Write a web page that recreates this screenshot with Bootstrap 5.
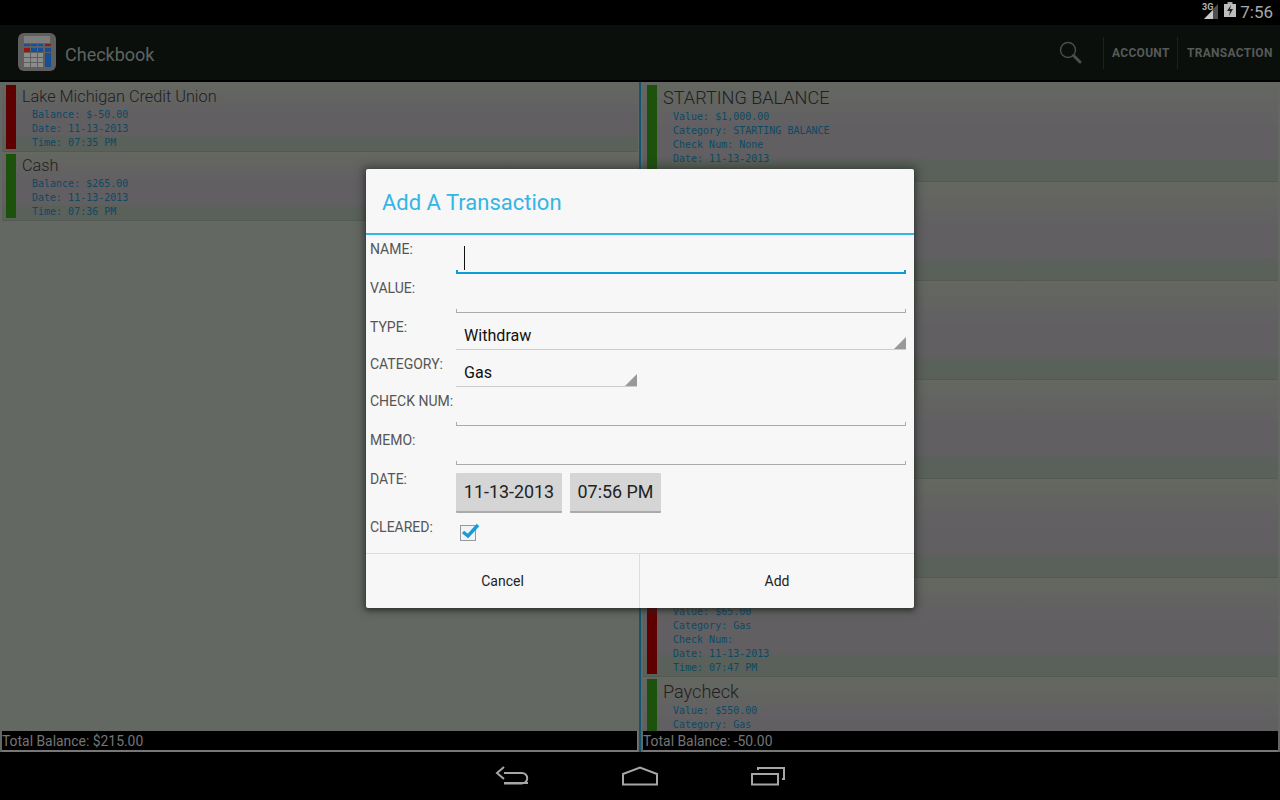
<!DOCTYPE html>
<html lang="en">
<head>
<meta charset="utf-8">
<title>Checkbook</title>
<link href="https://cdn.jsdelivr.net/npm/bootstrap@5.3.0/dist/css/bootstrap.min.css" rel="stylesheet">
<style>
html,body{width:1280px;height:800px;overflow:hidden;background:#000;font-family:Roboto,"Liberation Sans",sans-serif}
.app{width:1280px;height:800px;position:relative}
.statusbar{height:25px;background:#000;color:#a9a9a9;font-size:17px;line-height:25px;padding-right:7px}
.sig{margin-right:6px;margin-top:-4px}
.bat{margin-right:4px;margin-top:-5px}
.actionbar{height:57px;background:#0a0f0c;border-bottom:2px solid #000;color:#5f635f}
.appicon{margin-left:18px;margin-right:9px;margin-top:-1px}
.apptitle{font-size:18px;margin-top:3px}
.srch{margin-right:21px;margin-top:-1px}
.actbtn{font-size:12px;font-weight:700;letter-spacing:.3px;color:#565a57;height:32px;line-height:32px;border-left:1px solid #1c211e}
.btn-acc{width:74px;padding-left:8px}
.btn-tra{width:103px;padding-left:9px}
.main{height:670px;background:#646862}
.pane{height:670px;padding-top:1px}
.pane-l{width:639px;padding-left:2px;padding-right:1px}
.pane-r{width:641px;border-left:2px solid #115570;padding-left:2px;padding-right:2px}
.rowlist{flex:1 1 0;overflow:hidden}
.acct{border-bottom:1px solid #545953;background:linear-gradient(#646860 0,#625f63 45%,#625f63 75%,#5a605a 81%,#5a605a 100%);padding:2px 0 2px 4px;gap:6px}
.h68{height:69px}
.h98{height:99px}
.flag{width:10px;flex:none}
.flag-red{background:#5f0000}
.flag-green{background:#1c520b}
.acct-name{font-weight:300;font-size:16.3px;line-height:22px;height:23px;padding-top:1px;color:#202020}
.big{font-size:18.1px;line-height:22px;padding-top:2px;height:25px}
.acct-line{font-family:"DejaVu Sans Mono","Liberation Mono",monospace;font-size:10px;line-height:14px;color:#0c4a62;padding-left:10px;white-space:pre}
.total{height:19px;flex:none;background:#000;color:#757575;border-bottom:2px solid #777;font-size:13.9px;line-height:20px;box-sizing:content-box}
.total-l{border-right:1px solid #777}
.navbar-bottom{height:48px;background:#000}
.navslot{width:128px}
.dlg{position:absolute;left:366px;top:169px;width:548px;height:439px;background:#f7f7f7;border-radius:2px;box-shadow:0 0 8px 3px rgba(40,45,40,.55),0 2px 4px rgba(0,0,0,.4)}
.dlg-title{height:66px;border-bottom:2px solid #33b5e5;color:#33b5e5;font-size:22px;line-height:67px;padding-left:16px}
.frow{padding-left:4px;padding-right:8px}
.flabel{width:86px;flex:none;font-size:14px;line-height:20px;padding-top:4px;color:#555;white-space:nowrap}
.h39{height:39px}.h37{height:37px}.h48{height:48px}.h40{height:40px}
.fedit{flex:1 1 0;height:100%;border-bottom:1px solid #aaa;position:relative}
.fedit::before,.fedit::after{content:"";position:absolute;bottom:0;width:1px;height:3px;background:#aaa}
.fedit::before{left:0}.fedit::after{right:0}
.focused{border-bottom:2px solid #0a9dd6}
.focused::before,.focused::after{background:#0a9dd6;width:2px;height:4px;bottom:-2px}
.caret{position:absolute;left:8px;top:11px;width:1px;height:24px;background:#111}
.fspin{border-bottom:1px solid #ccc;height:37px;position:relative;font-size:16.1px;line-height:46px;padding-left:8px;color:#111}
.fspin::after{content:"";position:absolute;right:0;bottom:0;border-style:solid;border-width:0 0 12px 12px;border-color:transparent transparent #999 transparent}
.spin-full{flex:1 1 0}
.spin-half{width:181px}
.pick{height:40px;background:#d5d5d5;border-bottom:2px solid #aaa;font-size:17.9px;line-height:38px;color:#222;border-radius:1px;text-align:center}
.pick-d{width:106px;margin-right:8px}
.pick-t{width:91px}
.dlg-foot{height:55px;border-top:1px solid #ddd}
.dlg-btn{flex:1 1 0;font-size:14px;line-height:54px;color:#222;text-align:center}
.dlg-btn-first{flex:none;width:273px}
.dlg-btn-last{border-left:1px solid #ddd}
.ck{margin:10px 0 0 4px}
</style>
</head>
<body>
<div class="app d-flex flex-column">
  <div class="statusbar d-flex justify-content-end align-items-center">
    <svg class="sig" width="16" height="18" viewBox="0 0 16 18">
      <text x="0" y="8" font-family="Roboto,sans-serif" font-size="9" font-weight="700" fill="#b5b5b5">3G</text>
      <polygon points="2,17 16,17 16,2 12,6" fill="#4f4f4f"/>
      <polygon points="2,17 11,17 11,8" fill="#c8c8c8"/>
    </svg>
    <svg class="bat" width="12" height="16" viewBox="0 0 12 16">
      <rect x="3.5" y="0" width="5" height="2" fill="#aaa"/>
      <rect x="0" y="2" width="12" height="13" fill="#bdbdbd"/>
      <polygon points="7,3 3,9 6,9 5,14 9,7 6,7" fill="#222"/>
    </svg>
    <span>7:56</span>
  </div>

  <div class="actionbar d-flex align-items-center">
    <svg class="appicon" width="38" height="38" viewBox="0 0 38 38">
      <rect width="38" height="38" rx="6" fill="#5f5f5f"/>
      <rect x="6" y="3" width="26" height="7" fill="#7d7d7d"/>
      <rect x="6" y="11" width="6" height="2" fill="#174f96"/><rect x="13" y="11" width="6" height="2" fill="#174f96"/><rect x="20" y="11" width="5" height="2" fill="#174f96"/><rect x="27" y="11" width="6" height="2" fill="#8a1c10"/>
      <rect x="6" y="15" width="6" height="4" fill="#9d1408"/><rect x="13" y="15" width="6" height="4" fill="#174f96"/><rect x="20" y="15" width="5" height="4" fill="#174f96"/>
      <rect x="27" y="15" width="6" height="4" fill="#174f96"/>
      <rect x="6" y="20" width="6" height="4" fill="#8c8c8c"/><rect x="13" y="20" width="6" height="4" fill="#8c8c8c"/><rect x="20" y="20" width="5" height="4" fill="#8c8c8c"/><rect x="27" y="20" width="6" height="14" fill="#174f96"/>
      <rect x="6" y="25" width="6" height="4" fill="#8c8c8c"/><rect x="13" y="25" width="6" height="4" fill="#8c8c8c"/><rect x="20" y="25" width="5" height="4" fill="#8c8c8c"/>
      <rect x="6" y="30" width="6" height="4" fill="#8c8c8c"/><rect x="13" y="30" width="6" height="4" fill="#8c8c8c"/><rect x="20" y="30" width="5" height="4" fill="#8c8c8c"/>
    </svg>
    <span class="apptitle flex-grow-1">Checkbook</span>
    <svg class="srch" width="23" height="23" viewBox="0 0 23 23">
      <circle cx="9" cy="9" r="7.5" fill="none" stroke="#4a4e4b" stroke-width="1.4"/>
      <line x1="14.5" y1="14.5" x2="21" y2="21" stroke="#4a4e4b" stroke-width="3" stroke-linecap="round"/>
    </svg>
    <span class="actbtn btn-acc">ACCOUNT</span>
    <span class="actbtn btn-tra">TRANSACTION</span>
  </div>

  <div class="main d-flex">
    <div class="pane pane-l d-flex flex-column">
      <div class="rowlist">
        <div class="acct h68 d-flex">
          <div class="flag flag-red"></div>
          <div><div class="acct-name">Lake Michigan Credit Union</div>
            <div class="acct-line">Balance: $-50.00</div><div class="acct-line">Date: 11-13-2013</div><div class="acct-line">Time: 07:35 PM</div></div>
        </div>
        <div class="acct h68 d-flex">
          <div class="flag flag-green"></div>
          <div><div class="acct-name">Cash</div>
            <div class="acct-line">Balance: $265.00</div><div class="acct-line">Date: 11-13-2013</div><div class="acct-line">Time: 07:36 PM</div></div>
        </div>
      </div>
      <div class="total total-l">Total Balance: $215.00</div>
    </div>
    <div class="pane pane-r d-flex flex-column">
      <div class="rowlist">
        <div class="acct h98 d-flex">
          <div class="flag flag-green"></div>
          <div><div class="acct-name big">STARTING BALANCE</div>
            <div class="acct-line">Value: $1,000.00</div><div class="acct-line">Category: STARTING BALANCE</div><div class="acct-line">Check Num: None</div><div class="acct-line">Date: 11-13-2013</div></div>
        </div>
        <div class="acct h98 d-flex"></div>
        <div class="acct h98 d-flex"></div>
        <div class="acct h98 d-flex"></div>
        <div class="acct h98 d-flex"></div>
        <div class="acct h98 d-flex">
          <div class="flag flag-red"></div>
          <div><div class="acct-name big">&nbsp;</div>
            <div class="acct-line">Value: $65.00</div><div class="acct-line">Category: Gas</div><div class="acct-line">Check Num:</div><div class="acct-line">Date: 11-13-2013</div><div class="acct-line">Time: 07:47 PM</div></div>
        </div>
        <div class="acct h98 d-flex">
          <div class="flag flag-green"></div>
          <div><div class="acct-name big">Paycheck</div>
            <div class="acct-line">Value: $550.00</div><div class="acct-line">Category: Gas</div></div>
        </div>
      </div>
      <div class="total">Total Balance: -50.00</div>
    </div>
  </div>

  <div class="navbar-bottom d-flex justify-content-center align-items-center">
    <div class="navslot d-flex justify-content-center">
      <svg width="34" height="20" viewBox="0 0 34 20"><path d="M33 18H9M9 8H27a5.2 5.2 0 0 1 0 10.4H9M9 2 2 8l7 6" fill="none" stroke="#a6a6a6" stroke-width="2" transform="translate(0,-1)"/></svg>
    </div>
    <div class="navslot d-flex justify-content-center">
      <svg width="36" height="20" viewBox="0 0 36 20"><path d="M1 18.5V8L18 1.5 35 8V18.5Z" fill="none" stroke="#a6a6a6" stroke-width="2"/></svg>
    </div>
    <div class="navslot d-flex justify-content-center">
      <svg width="34" height="20" viewBox="0 0 34 20"><path d="M1 8H27V18.5H1ZM7 4V2H33V13H31" fill="none" stroke="#a6a6a6" stroke-width="2"/></svg>
    </div>
  </div>

  <div class="dlg d-flex flex-column">
    <div class="dlg-title">Add A Transaction</div>
    <div class="frow h39 d-flex"><div class="flabel">NAME:</div><div class="fedit focused"><span class="caret"></span></div></div>
    <div class="frow h39 d-flex"><div class="flabel">VALUE:</div><div class="fedit"></div></div>
    <div class="frow h37 d-flex"><div class="flabel">TYPE:</div><div class="fspin spin-full">Withdraw</div></div>
    <div class="frow h37 d-flex"><div class="flabel">CATEGORY:</div><div class="fspin spin-half">Gas</div></div>
    <div class="frow h39 d-flex"><div class="flabel">CHECK NUM:</div><div class="fedit"></div></div>
    <div class="frow h39 d-flex"><div class="flabel">MEMO:</div><div class="fedit"></div></div>
    <div class="frow h48 d-flex"><div class="flabel">DATE:</div><div class="pick pick-d mt-2">11-13-2013</div><div class="pick pick-t mt-2">07:56 PM</div></div>
    <div class="frow h40 d-flex"><div class="flabel">CLEARED:</div>
      <svg class="ck" width="20" height="20" viewBox="0 0 20 20"><rect x="0.5" y="2.5" width="15" height="15" fill="#f0f4f6" stroke="#999"/><path d="M3 9 8 13 18 2" fill="none" stroke="#1a9ad6" stroke-width="3.4"/></svg>
    </div>
    <div class="dlg-foot d-flex">
      <div class="dlg-btn dlg-btn-first">Cancel</div>
      <div class="dlg-btn dlg-btn-last">Add</div>
    </div>
  </div>
</div>
</body>
</html>
